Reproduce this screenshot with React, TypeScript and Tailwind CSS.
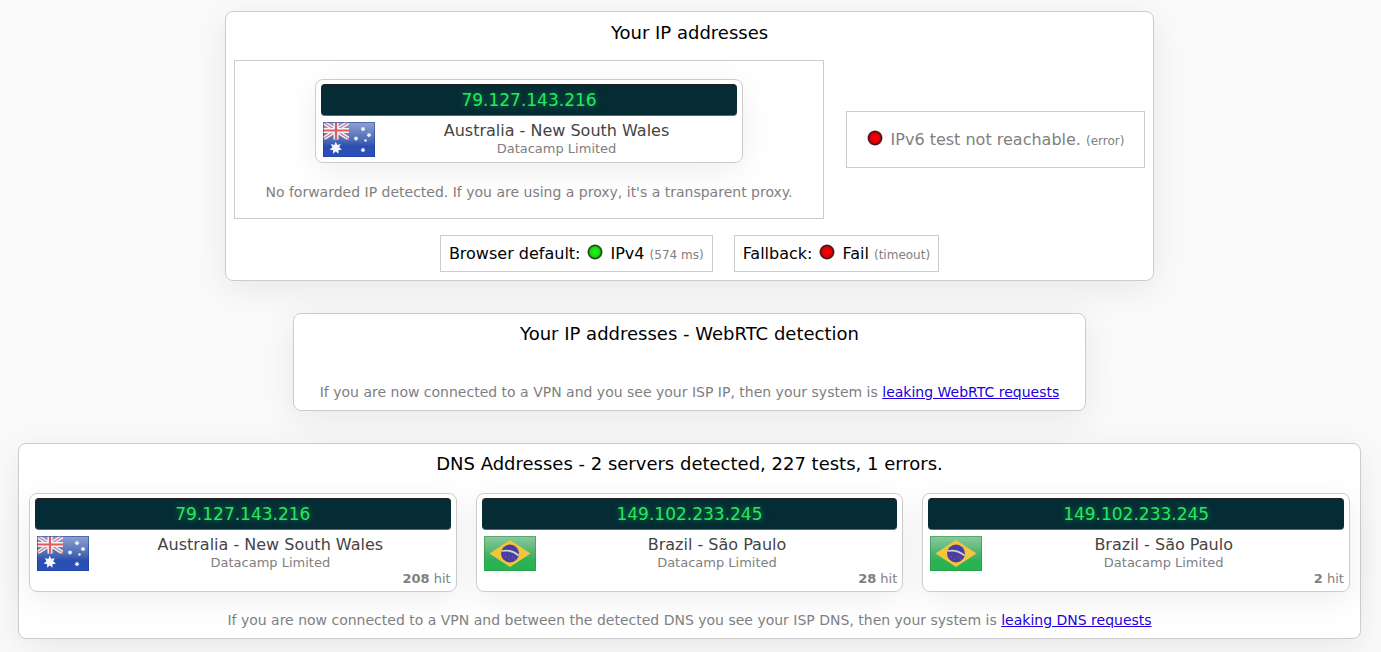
import React from "react";

type Country = "au" | "br";

function Star({ x, y, r }: { x: number; y: number; r: number }) {
  const points = Array.from({ length: 14 }, (_, i) => {
    const a = (Math.PI * i) / 7 - Math.PI / 2;
    const d = i % 2 ? r * 0.55 : r;
    return `${x + d * Math.cos(a)},${y + d * Math.sin(a)}`;
  }).join(" ");
  return <polygon points={points} fill="#f4f5fa" />;
}

function Flag({ country, id }: { country: Country; id: string }) {
  const au = country === "au";
  return (
    <svg width="54" height="36" viewBox="0 0 54 36" role="img" aria-label={au ? "Australia" : "Brazil"} className="shrink-0">
      <defs>
        <linearGradient id={id} x1="0" y1="0" x2="0" y2="1">
          <stop offset="0" stopColor={au ? "#8ea3cf" : "#8ccaa0"} />
          <stop offset="0.5" stopColor={au ? "#4f6db6" : "#4cb36a"} />
          <stop offset="0.7" stopColor={au ? "#2a4fb0" : "#2fb156"} />
          <stop offset="1" stopColor={au ? "#2a50bc" : "#22b54d"} />
        </linearGradient>
      </defs>
      <rect x="1" y="1" width="52" height="35" fill={`url(#${id})`} />
      {au ? (
        <>
          <svg x="1" y="1" width="26" height="17.5" viewBox="1 1 26 17.5">
            <g fill="none">
              <path d="M1 1 27 18M27 1 1 18" stroke="#efeff5" strokeWidth="4" />
              <path d="M1 1 27 18M27 1 1 18" stroke="#e47a80" strokeWidth="1.4" />
              <path d="M14 1V19M1 9.5H27" stroke="#f5f4f8" strokeWidth="5" />
              <path d="M14 1V19M1 9.5H27" stroke="#e05b61" strokeWidth="2.2" />
            </g>
          </svg>
          <Star x={13.8} y={27} r={6.3} />
          <Star x={41} y={8} r={2.6} />
          <Star x={34} y={17.5} r={2.6} />
          <Star x={47} y={14} r={2.6} />
          <Star x={43.5} y={19.5} r={1.7} />
          <Star x={41} y={29} r={2.6} />
        </>
      ) : (
        <>
          <path d="M27 5 47.5 18.5 27 32 6.5 18.5Z" fill="#f2c53d" />
          <circle cx="27" cy="18.5" r="9" fill="#4b3ca0" />
          <path d="M18.5 16Q28 14 35.6 20.5" fill="none" stroke="#c9d6d6" strokeWidth="1.7" />
          <path d="M22 22h1M25 24h1M29 22h1M31 24h1" stroke="#7c70bb" />
        </>
      )}
      <rect x="1.5" y="1.5" width="51" height="34" fill="none" stroke={au ? "#1f3c98" : "#2f8f4b"} strokeOpacity="0.55" />
    </svg>
  );
}

function Led({ color }: { color: "red" | "green" }) {
  const id = React.useId();
  const [inner, mid] = color === "red" ? ["#ff0008", "#dc0004"] : ["#20fa14", "#16d90c"];
  const dark = color === "red" ? "#3a1414" : "#1c3a18";
  return (
    <svg width="16" height="16" viewBox="0 0 16 16" aria-hidden="true" className="mb-1 shrink-0">
      <defs>
        <radialGradient id={id}>
          <stop offset="0" stopColor={inner} />
          <stop offset="0.6" stopColor={mid} />
          <stop offset="0.84" stopColor={dark} />
          <stop offset="1" stopColor={dark} stopOpacity="0" />
        </radialGradient>
      </defs>
      <circle cx="8" cy="8" r="8" fill={`url(#${id})`} />
    </svg>
  );
}

interface Server {
  ip: string;
  place: string;
  country: Country;
  hits?: number;
}

function IpCard({ ip, place, country, hits }: Server) {
  const id = React.useId();
  return (
    <article className="rounded-lg border border-[#ccc] bg-white p-[5px] pt-1 shadow-[0_8px_32px_rgba(0,0,0,0.07)]">
      <div className="flex h-8 items-center justify-center rounded border-y border-t-[#222] border-b-[#667] bg-[#052c35] text-[17px] leading-4 text-[#23ea5c] [text-shadow:0_0_6px_rgba(35,234,92,0.5)]">
        {ip}
      </div>
      <div className="flex items-start pt-[5px] pl-px">
        <Flag country={country} id={id} />
        <div className="flex-1 text-center">
          <div className="text-base leading-5 text-[#444]">{place}</div>
          <div className="text-[13px] leading-[15px] text-[#808080]">Datacamp Limited</div>
        </div>
      </div>
      {hits !== undefined && (
        <div className="text-right text-[13px] leading-[15px] text-[#808080]">
          <b>{hits}</b> hit
        </div>
      )}
    </article>
  );
}

const servers: Server[] = [
  { ip: "79.127.143.216", place: "Australia - New South Wales", country: "au", hits: 208 },
  { ip: "149.102.233.245", place: "Brazil - São Paulo", country: "br", hits: 28 },
  { ip: "149.102.233.245", place: "Brazil - São Paulo", country: "br", hits: 2 },
];

const panel = "rounded-lg border border-[#ccc] bg-white shadow-[0_8px_36px_rgba(0,0,0,0.08)]";

export default function App() {
  return (
    <main className="flex min-h-screen flex-col items-center gap-8 bg-[#fafafa] pt-[11px] pr-5 pb-3 pl-[18px] font-['Verdana','DejaVu_Sans',sans-serif] text-base text-black">
      <section className={`${panel} w-full max-w-[929px] p-2`}>
        <h2 className="pt-px text-center text-lg leading-6">Your IP addresses</h2>
        <div className="mt-[15px] flex items-center justify-between gap-[22px]">
          <div className="w-full max-w-[590px] border border-[#ccc] pt-[18px] pb-[15px]">
            <div className="mx-auto w-full max-w-[428px]">
              <IpCard ip="79.127.143.216" place="Australia - New South Wales" country="au" />
            </div>
            <p className="pt-[18px] text-center text-sm leading-[22px] text-[#808080]">
              No forwarded IP detected. If you are using a proxy, it's a transparent proxy.
            </p>
          </div>
          <div className="flex h-[57px] w-full max-w-[299px] items-center justify-center gap-2 border border-[#ccc] whitespace-nowrap text-[#808080]">
            <Led color="red" />
            <span>
              IPv6 test not reachable. <small className="text-xs">(error)</small>
            </span>
          </div>
        </div>
        <div className="mt-4 flex justify-center gap-[21px]">
          <div className="flex h-[37px] items-center gap-[7px] border border-[#ccc] px-2">
            <span>Browser default:</span>
            <Led color="green" />
            <span>
              IPv4 <small className="text-xs text-[#808080]">(574 ms)</small>
            </span>
          </div>
          <div className="flex h-[37px] items-center gap-[7px] border border-[#ccc] px-2">
            <span>Fallback:</span>
            <Led color="red" />
            <span>
              Fail <small className="text-xs text-[#808080]">(timeout)</small>
            </span>
          </div>
        </div>
      </section>

      <section className={`${panel} w-full max-w-[793px] px-2 pt-2 pb-[7px] text-center`}>
        <h2 className="text-lg leading-6">Your IP addresses - WebRTC detection</h2>
        <p className="pt-[35px] text-sm leading-[22px] text-[#808080]">
          If you are now connected to a VPN and you see your ISP IP, then your system is{" "}
          <a href="#webrtc" className="text-[#2200dd] underline">leaking WebRTC requests</a>
        </p>
      </section>

      <section className={`${panel} w-full px-2.5 pt-2 pb-[7px] text-center`}>
        <h2 className="text-lg leading-6">DNS Addresses - 2 servers detected, 227 tests, 1 errors.</h2>
        <div className="grid grid-cols-3 gap-[19px] pt-[17px]">
          {servers.map((s, i) => (
            <IpCard key={i} {...s} />
          ))}
        </div>
        <p className="pt-[17px] text-sm leading-[22px] text-[#808080]">
          If you are now connected to a VPN and between the detected DNS you see your ISP DNS, then your system is{" "}
          <a href="#dns" className="text-[#2200dd] underline">leaking DNS requests</a>
        </p>
      </section>
    </main>
  );
}
